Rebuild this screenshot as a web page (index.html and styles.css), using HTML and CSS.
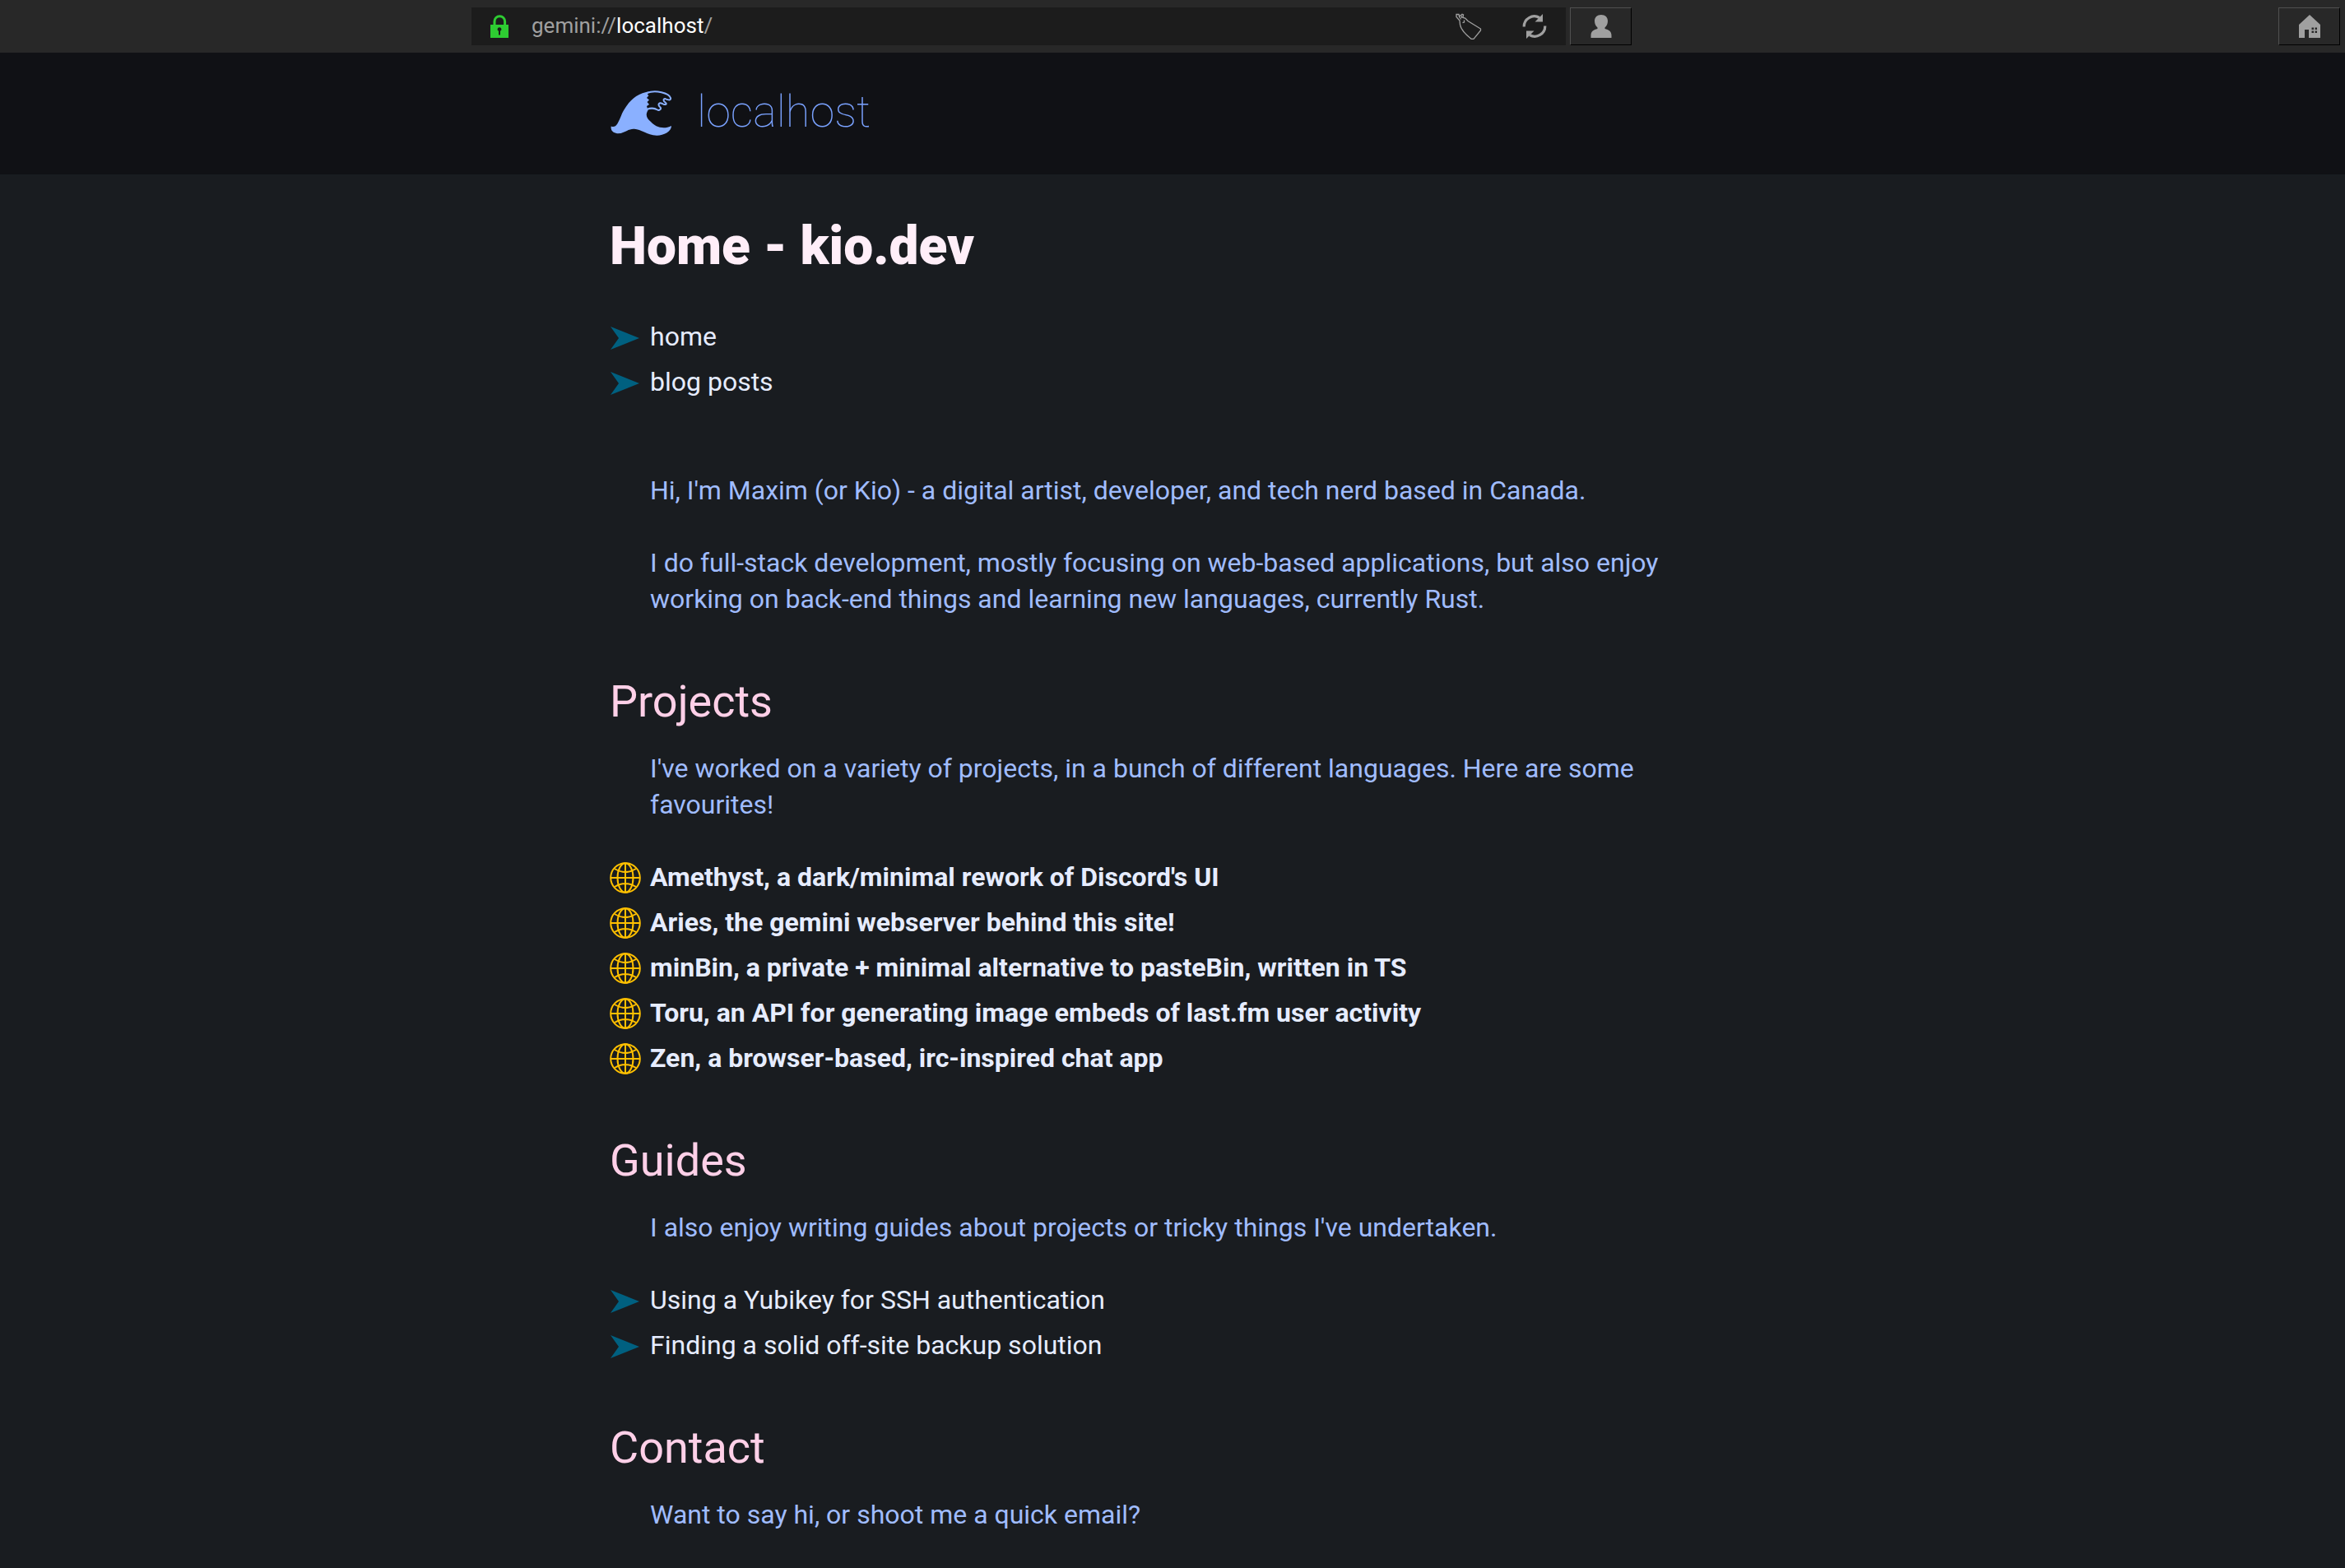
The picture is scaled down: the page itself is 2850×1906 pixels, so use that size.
FILE: index.html
```html
<!DOCTYPE html>
<html lang="en">
<head>
<meta charset="utf-8">
<meta name="viewport" content="width=device-width, initial-scale=1">
<title>Home - kio.dev</title>
<link rel="stylesheet" href="styles.css">
</head>
<body>
<svg class="defs" aria-hidden="true">
  <symbol id="arrow" viewBox="0 0 38 38">
    <path d="M1 6L36 20L1 34L11 20Z" fill="#006080"/>
  </symbol>
  <symbol id="globe" viewBox="0 0 38 38">
    <g fill="none" stroke="#ffc000" stroke-width="2">
      <circle cx="19" cy="19" r="17.800"/>
      <path d="M1 19H37M19 1V37M6 8Q19 16 32 8M6 30Q19 22 32 30"/>
      <ellipse cx="19" cy="19" rx="9.500" ry="17.800"/>
    </g>
  </symbol>
</svg>

<nav class="toolbar" aria-label="Navigation">
  <div class="location">
    <div class="field">
      <button class="tool lock" type="button" aria-label="Page information">
        <svg width="22" height="28" viewBox="0 0 22 28"><path d="M5 12V8a6.300 6.300 0 0 1 12.600 0v4" fill="none" stroke="#2ecc32" stroke-width="3"/><path d="M0 12H22V28H0Z" fill="#2ecc32"/><path d="M11 15.200a2.400 2.400 0 0 1 1 4.600V24.500H10V19.800a2.400 2.400 0 0 1 1-4.600Z" fill="#1c1c1c"/></svg>
      </button>
      <a class="url" href="#">gemini://<span class="host">localhost</span>/</a>
      <button class="tool" type="button" aria-label="Bookmark">
        <svg width="32" height="32" viewBox="0 0 32 32"><path d="M1 1.500H4L4.500 4L8 1.300L9.500 2L9 5.500L11.700 6L15 9.500L30.500 19V21L22 31.300H19Q7 22 5.500 14L5 9L1 4.500ZM4.500 4L6.500 7.500M7.500 3V6M10.500 8.500V11L8.500 11.700" fill="none" stroke="#a0a0a0" stroke-width="1.300"/></svg>
      </button>
      <button class="tool reload" type="button" aria-label="Reload">
        <svg width="30" height="30" viewBox="0 0 30 30"><g fill="none" stroke="#a0a0a0" stroke-width="3.200"><path d="M2.200 15.500A12.500 12.500 0 0 1 21 4.500"/><path d="M27.800 14.500A12.500 12.500 0 0 1 9 25.500"/></g><path d="M25 0V9.500H15.500ZM5 30V20.500H14.500Z" fill="#a0a0a0"/></svg>
      </button>
    </div>
    <button class="key" type="button" aria-label="Identity">
      <svg width="26" height="28" viewBox="0 0 26 28"><path d="M13 0C18 0 21 3 21 7.500C21 11 19.500 14 17.500 15.500V17C22 18 25.500 20 25.500 25V28H.5V25C.5 20 4 18 8.500 17V15.500C6.500 14 5 11 5 7.500C5 3 8 0 13 0Z" fill="#a0a0a0"/></svg>
    </button>
  </div>
  <button class="key home" type="button" aria-label="Home">
    <svg width="26" height="28" viewBox="0 0 26 28"><path fill-rule="evenodd" d="M13 0L26 12V28H12V18H7V28H0V12ZM15.500 15.500V18H18V15.500ZM19.500 15.500V18H22V15.500ZM15.500 19.500V22H18V19.500ZM19.500 19.500V22H22V19.500Z" fill="#a0a0a0"/></svg>
  </button>
</nav>

<header class="banner">
  <div class="column site">
    <svg width="76" height="56" viewBox="0 0 76 56" aria-hidden="true"><path d="M1.700 43.500C7 46 10 41 15 28C20 18 30 3 49 1.300C46 3 45 5 47.500 6L45 9L48 11.500L45.500 14L48 17L45 19L46.500 24C43 30 45 34 50 38C55 44 65 48 75 43C75 50 65 55 57 54.700C45 54 38 47 30 46.700C22 46 17 53 9 52.300C4 51 1 49 1.700 43.500Z" fill="#8ab0ff"/><path d="M45 3C56 -1 72 3 74 9C75 13 69 11 67.300 10C65 10 65 13 67 14C71 17 67 18 64 16C60 14 58 17 61 20C64 22 60 25 58 23.500C54 21 50 21 45 23" fill="none" stroke="#8ab0ff" stroke-width="2"/></svg>
    <a class="site-name" href="#">localhost</a>
  </div>
</header>

<main class="column page">
  <h1>Home - kio.dev</h1>
  <ul class="links">
    <li><a href="#"><svg class="mark"><use href="#arrow"/></svg>home</a></li>
    <li><a href="#"><svg class="mark"><use href="#arrow"/></svg>blog posts</a></li>
  </ul>
  <div class="intro">
    <p>Hi, I'm Maxim (or Kio) - a digital artist, developer, and tech nerd based in Canada.</p>
    <p>I do full-stack development, mostly focusing on web-based applications, but also enjoy working on back-end things and learning new languages, currently Rust.</p>
  </div>

  <section>
    <h2>Projects</h2>
    <p>I've worked on a variety of projects, in a bunch of different languages. Here are some favourites!</p>
    <ul class="links web">
      <li><a href="#"><svg class="mark"><use href="#globe"/></svg>Amethyst, a dark/minimal rework of Discord's UI</a></li>
      <li><a href="#"><svg class="mark"><use href="#globe"/></svg>Aries, the gemini webserver behind this site!</a></li>
      <li><a href="#"><svg class="mark"><use href="#globe"/></svg>minBin, a private + minimal alternative to pasteBin, written in TS</a></li>
      <li><a href="#"><svg class="mark"><use href="#globe"/></svg>Toru, an API for generating image embeds of last.fm user activity</a></li>
      <li><a href="#"><svg class="mark"><use href="#globe"/></svg>Zen, a browser-based, irc-inspired chat app</a></li>
    </ul>
  </section>

  <section>
    <h2>Guides</h2>
    <p>I also enjoy writing guides about projects or tricky things I've undertaken.</p>
    <ul class="links">
      <li><a href="#"><svg class="mark"><use href="#arrow"/></svg>Using a Yubikey for SSH authentication</a></li>
      <li><a href="#"><svg class="mark"><use href="#arrow"/></svg>Finding a solid off-site backup solution</a></li>
    </ul>
  </section>

  <section>
    <h2>Contact</h2>
    <p>Want to say hi, or shoot me a quick email?</p>
  </section>
</main>
</body>
</html>
```
FILE: styles.css
```css
* {
  box-sizing: border-box;
}

body {
  margin: 0;
  background: #191c20;
  color: #a0bcff;
  font: 32px/44px Roboto, "Liberation Sans", sans-serif;
}

h1, h2, p, ul {
  margin: 0;
  padding: 0;
}

a {
  color: inherit;
  text-decoration: none;
}

button {
  display: flex;
  align-items: center;
  justify-content: center;
  padding: 0;
  border: 0;
  background: none;
}

svg {
  flex: none;
}

.defs {
  display: none;
}

/* Toolbar */
.toolbar {
  display: grid;
  grid-template-columns: 573fr 1410fr 867fr;
  padding: 9px 0;
  background: #282828;
}

.location {
  grid-column: 2;
  display: flex;
  gap: 5px;
}

.field {
  flex: 1;
  display: flex;
  align-items: center;
  height: 46px;
  padding-right: 23px;
  background: #1c1c1c;
}

.tool {
  width: 80px;
  height: 46px;
}

.reload {
  width: 30px;
  margin-left: 25px;
}

.lock {
  width: 68px;
}

.url {
  flex: 1;
  padding: 0 0 2px 5px;
  color: #a0a0a0;
  font-size: 26px;
}

.host {
  color: #fff;
}

.key {
  width: 75px;
  height: 46px;
  border: 1px solid;
  border-color: #505050 #000 #000 #505050;
}

.home {
  justify-self: end;
  margin-right: 6px;
}

/* Site banner */
.column {
  max-width: 1368px;
  margin: 0 auto;
}

.banner {
  padding: 36px 0;
  background: #101115;
}

.site {
  display: flex;
  align-items: center;
  gap: 30px;
  height: 76px;
}

.site-name {
  padding-bottom: 4px;
  color: #7aa2ff;
  font-size: 54px;
  font-weight: 100;
  line-height: 72px;
}

/* Page */
.page {
  padding: 44px 0;
}

h1 {
  margin-bottom: 38px;
  color: #ffeef8;
  font-size: 64px;
  font-weight: 900;
  line-height: 88px;
}

h2 {
  margin-bottom: 23px;
  color: #ffd0e8;
  font-size: 54px;
  font-weight: 400;
  line-height: 72px;
}

p {
  padding-left: 49px;
}

section {
  margin-top: 61px;
}

.intro {
  display: grid;
  gap: 44px;
  margin: 82px 0 67px;
}

.links {
  color: #e6ecff;
  line-height: 55px;
  list-style: none;
}

.links a {
  display: flex;
  align-items: center;
  gap: 11px;
}

.web {
  font-weight: 700;
}

p + .links {
  margin-top: 39px;
}

.mark {
  width: 38px;
  height: 38px;
}
```
